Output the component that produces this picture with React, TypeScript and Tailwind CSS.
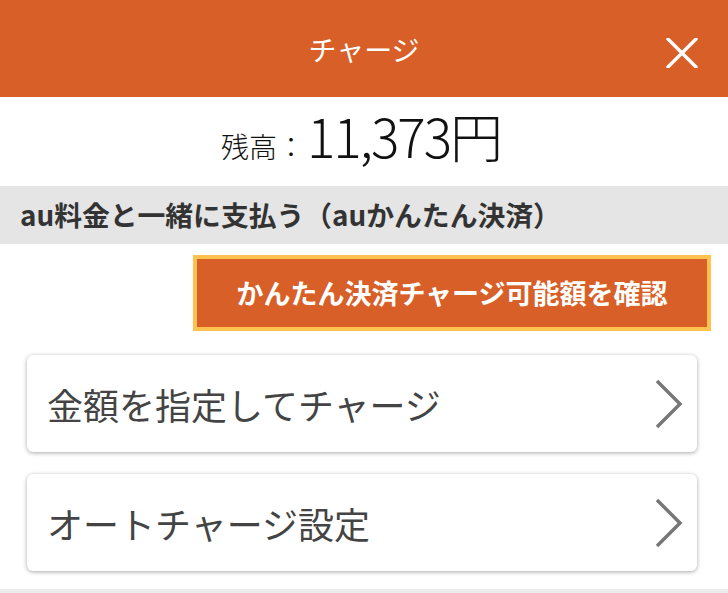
const JP = "font-['Noto_Sans_CJK_JP','Noto_Sans',sans-serif]";

function MenuCard({ label }: { label: string }) {
  return (
    <button className="flex h-[97px] w-full items-center justify-between rounded-[6px] bg-white pl-[20px] pr-[12px] text-left shadow-[0_1px_4px_rgba(0,0,0,0.35)]">
      <span className="text-[36px] leading-none text-[#444]">{label}</span>
      <svg width="32" height="52" viewBox="0 0 32 52" className="text-[#777]">
        <path d="M4 3 L27 26 L4 49" fill="none" stroke="currentColor" strokeWidth="3.5" />
      </svg>
    </button>
  );
}

export default function App() {
  return (
    <div className={`${JP} min-h-[593px] w-[728px] overflow-hidden bg-white`}>
      {/* ヘッダー */}
      <header className="relative flex h-[97px] items-center justify-center bg-[#d85f27]">
        <h1 className="text-[28px] font-normal text-white">チャージ</h1>
        <button className="absolute right-[30px] top-[38px]" aria-label="閉じる">
          <svg width="32" height="30" viewBox="0 0 32 30">
            <path d="M2 1 L30 29 M30 1 L2 29" stroke="white" strokeWidth="3.4" strokeLinecap="round" />
          </svg>
        </button>
      </header>

      {/* 残高 */}
      <div className="flex h-[89px] items-baseline justify-center gap-[2px] pt-[12px] pr-[6px] text-[#111]">
        <span className="text-[28px] leading-none font-light">残高：</span>
        <span className="text-[53px] leading-none font-light tracking-[-2px]">11,373円</span>
      </div>

      {/* au料金 */}
      <div className="flex h-[58px] items-center bg-[#e5e5e5] px-[20px]">
        <p className="text-[27.8px] font-bold text-[#333]">au料金と一緒に支払う（auかんたん決済）</p>
      </div>

      <div className="flex justify-end pr-[17px] pt-[11px]">
        <button className="flex h-[76px] w-[518px] items-center justify-center border-[4px] border-[#ffc24f] bg-[#d85f27] text-[27px] font-bold text-white">
          かんたん決済チャージ可能額を確認
        </button>
      </div>

      <div className="flex flex-col gap-[22px] px-[27px] pt-[24px] pb-[18px] [&>*]:w-[670px]">
        <MenuCard label="金額を指定してチャージ" />
        <MenuCard label="オートチャージ設定" />
      </div>

      <div className="h-[10px] bg-[#ececec]" />
    </div>
  );
}
